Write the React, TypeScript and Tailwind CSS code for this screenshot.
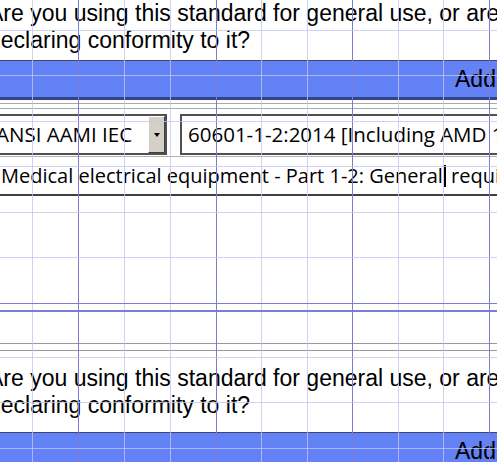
const sans = "font-['Liberation_Sans',Arial,sans-serif]";
const field = "font-['Open_Sans','Noto_Sans',sans-serif]";

const Question = () => {
  return (
    <div className={`${sans} -ml-[12px] text-[23px] leading-[27px] text-black whitespace-nowrap`}>
      <div>Are you using this standard for general use, or are</div>
      <div>declaring conformity to it?</div>
    </div>
  );
};

const AddBar = () => {
  return (
    <div className="flex h-[40px] items-center border-t border-b-[3px] border-t-[#3a4570] border-b-[#34448a] bg-[#6282f5] pl-[455px]">
      <span className={`${sans} whitespace-nowrap text-[23px] leading-none text-black`}>Add</span>
    </div>
  );
};

const GridOverlay = () => {
  const light = [32, 124, 170, 261, 307, 398, 443];
  const dark = [78, 216, 352, 489];
  const rows = [30, 75, 121, 166, 212, 257, 357, 402, 448];
  return (
    <div className="pointer-events-none absolute inset-0">
      {light.map((x) => (
        <div key={"l" + x} className="absolute top-0 bottom-0 w-px bg-[#c4c4ef]/80" style={{ left: x }} />
      ))}
      {dark.map((x) => (
        <div key={"d" + x} className="absolute top-0 bottom-0 w-px bg-[#7c7cd2]" style={{ left: x }} />
      ))}
      {rows.map((y) => (
        <div key={"r" + y} className="absolute left-0 right-0 h-px bg-[#c4c4ef]/80" style={{ top: y }} />
      ))}
      <div className="absolute left-0 right-0 top-[303px] h-px bg-[#7c7cd2]" />
      <div className="absolute left-0 right-0 top-[310px] h-[2px] bg-[#7c7cd2]" />
    </div>
  );
};

const App = () => {
  return (
    <div className="relative h-[462px] w-[497px] overflow-hidden bg-white">
      {/* first standard */}
      <Question />
      <div className="mt-[6px]">
        <AddBar />
      </div>
      <div className="mt-[3px] h-px bg-[#a9a9a9]" />
      <div className="mt-[4px] h-px bg-[#a9a9a9]" />

      <div className={`${field} mt-[5px] flex h-[41px] text-[20.5px] text-black`}>
        <div className="-ml-[20px] flex w-[187px] border-2 border-[#505050] bg-white">
          <div className="flex flex-1 items-center overflow-hidden whitespace-nowrap pl-[14px] text-[20.5px]">ANSI AAMI IEC</div>
          <div className="flex w-[17px] items-center justify-center border border-t-white border-l-white border-r-[#404040] border-b-[#404040] bg-[#d4d0c8]">
            <div className="h-0 w-0 border-x-[3px] border-t-[4px] border-x-transparent border-t-black" />
          </div>
        </div>
        <div className="ml-[13px] -mr-[20px] flex flex-1 items-center whitespace-nowrap border-2 border-[#505050] bg-white pl-[6px]">
          60601-1-2:2014 [Including AMD 1]
        </div>
      </div>

      <div className={`${field} mt-[1px] -mx-[10px] flex h-[40px] items-center whitespace-nowrap border-t border-b-2 border-t-[#b0b0b0] border-b-[#404040] bg-white pl-[11px] text-[20px] text-black`}>
        <span>
          Medical electrical equipment - Part 1-2: General
          <span className="ml-[1px] inline-block h-[22px] w-[2px] bg-black align-[-4px]" /> requirements for basic safety
        </span>
      </div>

      <div className="mt-[147px] h-px bg-[#999999]" />
      <div className="mt-[6px] h-px bg-[#999999]" />

      {/* next standard */}
      <div className="mt-[14px]">
        <Question />
      </div>
      <div className="mt-[13px]">
        <AddBar />
      </div>

      <GridOverlay />
    </div>
  );
};

export default App;
